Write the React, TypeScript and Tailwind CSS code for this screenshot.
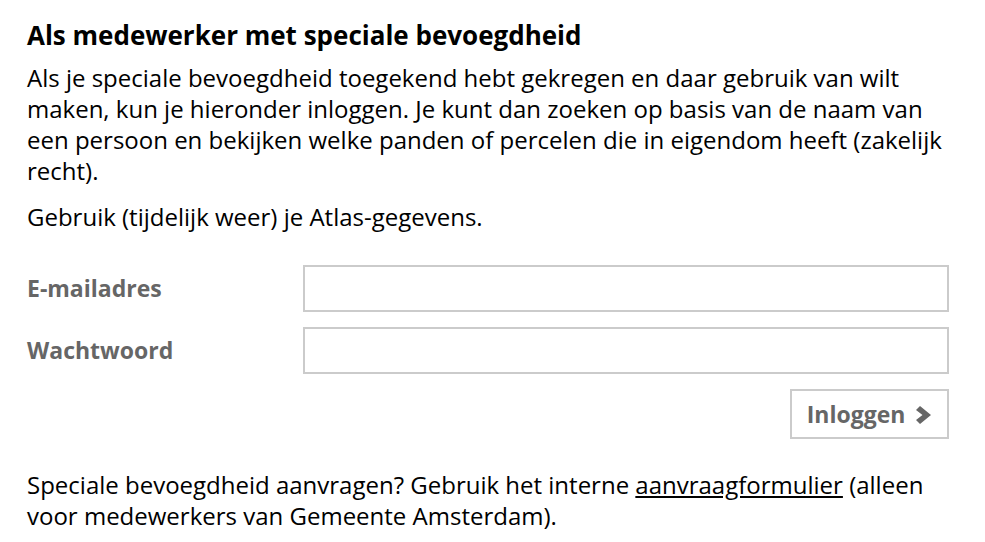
export default function App() {
  return (
    <div className="bg-white w-[985px] h-[542px] overflow-hidden text-black" style={{ fontFamily: "'Open Sans', Lato, sans-serif" }}>
      <div className="pl-[27px] pr-[36px] pt-[18px]">
        <h2 className="text-[26px] font-bold leading-[34px]">Als medewerker met speciale bevoegdheid</h2>
        <p className="mt-[10px] text-[24px] leading-[31px] whitespace-nowrap">
          Als je speciale bevoegdheid toegekend hebt gekregen en daar gebruik van wilt
          <br />
          maken, kun je hieronder inloggen. Je kunt dan zoeken op basis van de naam van
          <br />
          een persoon en bekijken welke panden of percelen die in eigendom heeft (zakelijk
          <br />
          recht).
        </p>
        <p className="mt-[15px] text-[24px] leading-[31px]">Gebruik (tijdelijk weer) je Atlas-gegevens.</p>

        <form className="mt-[33px] flex flex-col gap-[15px]" onSubmit={(e) => e.preventDefault()}>
          <div className="flex items-center">
            <label className="w-[276px] text-[23px] font-bold text-[#666]">E-mailadres</label>
            <input type="email" className="flex-1 h-[47px] border-2 border-[#cbcbcb] bg-white outline-none" />
          </div>
          <div className="flex items-center">
            <label className="w-[276px] text-[23px] font-bold text-[#666]">Wachtwoord</label>
            <input type="password" className="flex-1 h-[47px] border-2 border-[#cbcbcb] bg-white outline-none" />
          </div>
          <div className="flex justify-end">
            <button type="submit" className="h-[50px] w-[159px] border-2 border-[#cbcbcb] bg-white flex items-center justify-center gap-[11px] text-[23px] font-bold text-[#666]">
              Inloggen
              <svg width="16" height="18" viewBox="0 0 16 18" fill="#666" className="mt-[1px]">
                <polygon points="0,4 4,0 15,9 4,18 0,14 6.5,9" />
              </svg>
            </button>
          </div>
        </form>

        <p className="mt-[30px] text-[24px] leading-[31px] whitespace-nowrap">
          Speciale bevoegdheid aanvragen? Gebruik het interne <a href="#" className="underline">aanvraagformulier</a> (alleen
          <br />
          voor medewerkers van Gemeente Amsterdam).
        </p>
      </div>
    </div>
  );
}
